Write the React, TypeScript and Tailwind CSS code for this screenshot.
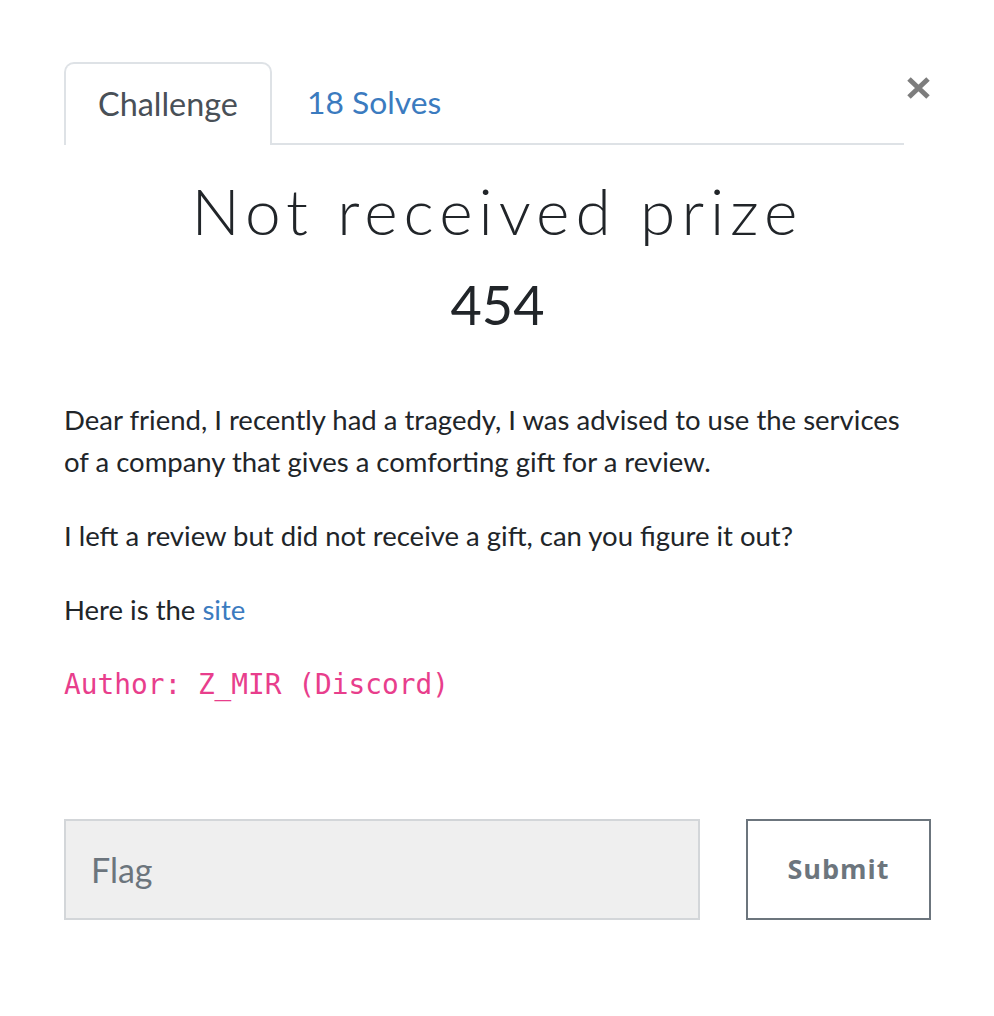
export default function App() {
  return (
    <div className="w-[994px] h-[1016px] bg-white pl-[64px] pr-[63px] pt-[62px] font-['Lato',sans-serif] text-[#212529]">
      <div className="flex items-start">
        <ul className="flex flex-1 border-b-2 border-[#dee2e6]">
          <li className="-mb-[2px] h-[83px] px-[32px] flex items-center border-2 border-b-0 border-[#dee2e6] rounded-t-[10px] bg-white text-[32.4px] text-[#495057]">
            Challenge
          </li>
          <li className="h-[81px] px-[35px] flex items-center text-[31.8px] text-[#3b7bbf]">
            18 Solves
          </li>
        </ul>
        <button className="w-[27px] h-[83px] flex items-start pt-[14px] justify-end">
          <svg width="25" height="24" viewBox="0 0 25 24">
            <path d="M3 3 L22 21 M22 3 L3 21" stroke="#7d7d7d" strokeWidth="5" strokeLinecap="butt" />
          </svg>
        </button>
      </div>

      <h2 className="mt-[26px] mb-[22px] text-center text-[64px] leading-[80px] font-light tracking-[6px] text-[#212529]">
        Not received prize
      </h2>
      <h3 className="text-center text-[54px] leading-[64px] font-normal text-[#212529]">454</h3>

      <div className="mt-[62px] text-[27.5px] leading-[42px]">
        <p className="mb-[32px]">
          Dear friend, I recently had a tragedy, I was advised to use the services of a company that gives a comforting gift for a review.
        </p>
        <p className="mb-[32px]">I left a review but did not receive a gift, can you figure it out?</p>
        <p className="mb-[32px]">
          Here is the <a className="text-[#3b7bbf]">site</a>
        </p>
        <p>
          <code className="font-['DejaVu_Sans_Mono',monospace] text-[27.8px] text-[#e83e8c]">Author: Z_MIR (Discord)</code>
        </p>
      </div>

      <div className="mt-[113px] flex">
        <div className="w-[636px] h-[101px] bg-[#efefef] border-2 border-[#d3d6d9] flex items-center pl-[25px] text-[34px] text-[#6c757d]">
          Flag
        </div>
        <button className="ml-auto w-[185px] h-[101px] border-2 border-[#6c757d] text-[27px] font-bold tracking-[1px] text-[#6c757d] font-['Open_Sans',sans-serif]">
          Submit
        </button>
      </div>
    </div>
  );
}
